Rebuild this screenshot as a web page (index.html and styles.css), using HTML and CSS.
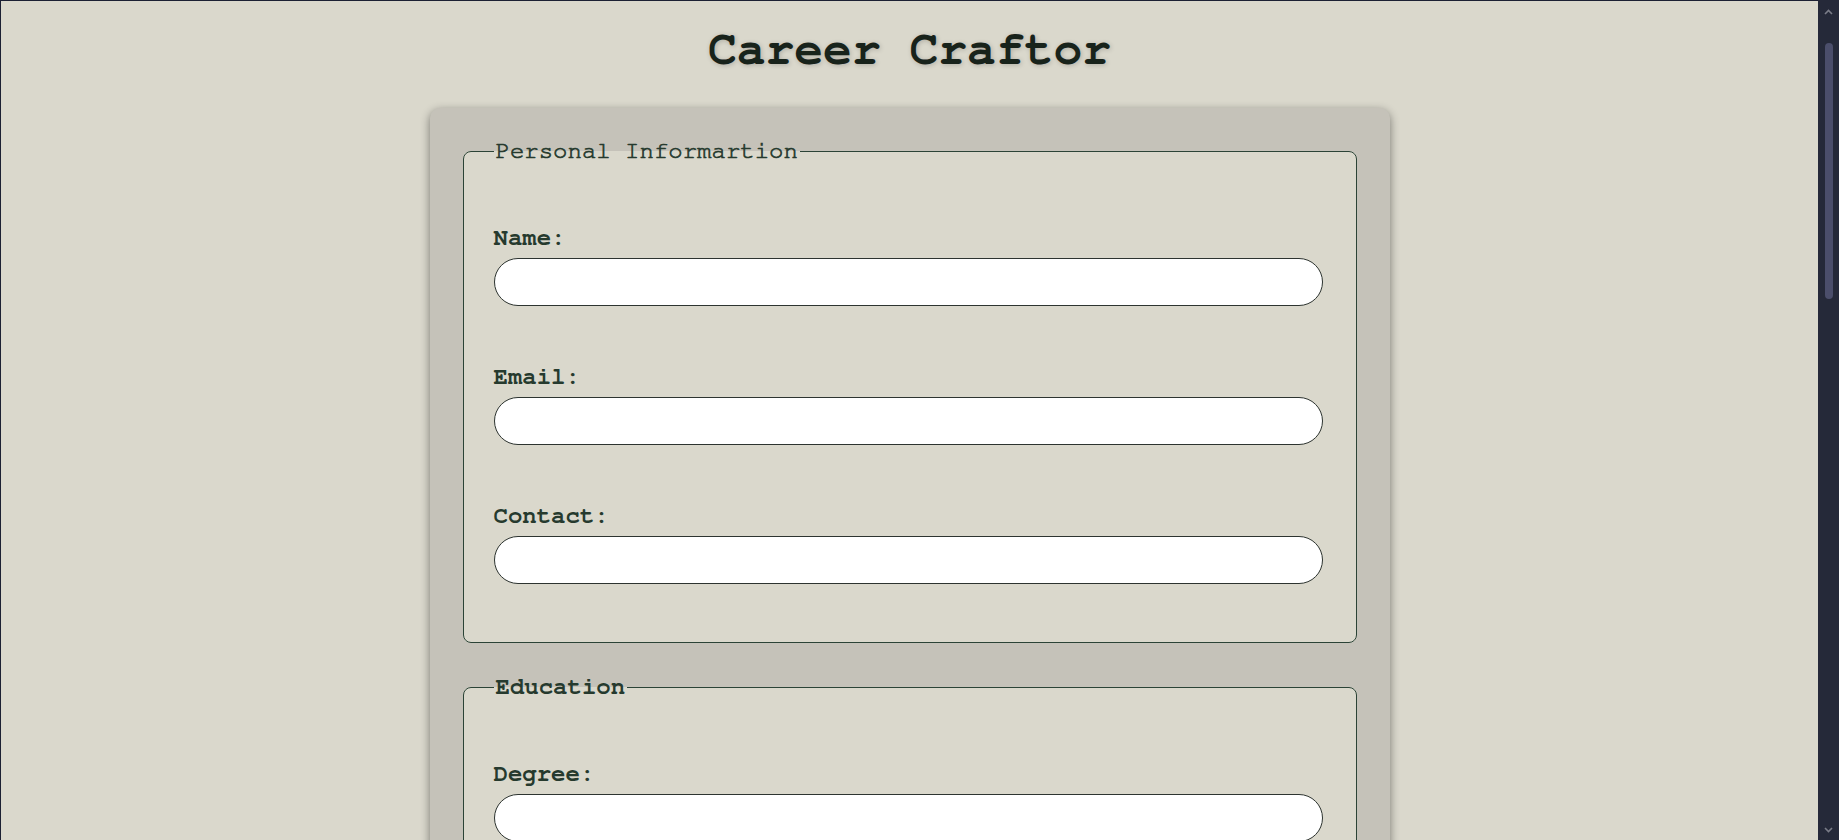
FILE: index.html
```html
<!DOCTYPE html>
<html lang="en">
<head>
<meta charset="utf-8">
<title>Career Craftor</title>
<link rel="stylesheet" href="styles.css">
</head>
<body>
<div class="window">
  <main class="page">
    <h1 class="title">Career Craftor</h1>
    <form class="card">
      <fieldset class="section">
        <legend class="legend legend-light">Personal Informartion</legend>
        <div class="group">
          <label class="label" for="name">Name:</label>
          <input class="field" id="name" type="text">
        </div>
        <div class="group">
          <label class="label" for="email">Email:</label>
          <input class="field" id="email" type="email">
        </div>
        <div class="group">
          <label class="label" for="contact">Contact:</label>
          <input class="field" id="contact" type="text">
        </div>
      </fieldset>
      <fieldset class="section">
        <legend class="legend">Education</legend>
        <div class="group">
          <label class="label" for="degree">Degree:</label>
          <input class="field" id="degree" type="text">
        </div>
        <div class="group">
          <label class="label" for="school">Institution:</label>
          <input class="field" id="school" type="text">
        </div>
      </fieldset>
    </form>
  </main>
  <div class="scrollbar">
    <div class="sb-btn sb-up">
      <svg width="9" height="6" viewBox="0 0 9 6"><path d="M1 5 L4.5 1.5 L8 5" fill="none" stroke="#7a7c88" stroke-width="1.6"/></svg>
    </div>
    <div class="sb-thumb"></div>
    <div class="sb-rest"></div>
    <div class="sb-btn sb-down">
      <svg width="9" height="6" viewBox="0 0 9 6"><path d="M1 1 L4.5 4.5 L8 1" fill="none" stroke="#7a7c88" stroke-width="1.6"/></svg>
    </div>
  </div>
</div>
</body>
</html>
```

FILE: styles.css
```css
html, body {
  margin: 0;
  padding: 0;
  height: 100%;
  overflow: hidden;
  background: #1c2033;
}

.window {
  display: flex;
  height: 100vh;
}

.page {
  flex: 1;
  min-width: 0;
  height: 100%;
  overflow: hidden;
  box-sizing: border-box;
  border-top: 1px solid #1c2033;
  border-left: 1px solid #1c2033;
  background: #dad8cc;
  font-family: "Nimbus Mono PS", "Nimbus Mono L", "FreeMono", "Courier", "Liberation Mono", monospace;
  color: #263a2e;
}

.title {
  margin: 22px 0 0;
  font-size: 48px;
  font-weight: bold;
  line-height: 54px;
  text-align: center;
  color: #18231b;
  text-shadow: 1px 1px 5px rgba(0, 0, 0, 0.2);
}

.card {
  width: 960px;
  box-sizing: border-box;
  margin: 31px auto 0;
  padding: 30px 33px;
  background: #c5c2b9;
  border-radius: 10px;
  box-shadow: 0 3px 10px rgba(0, 0, 0, 0.45);
}

.section {
  margin: 0 0 31px;
  padding: 2px 33px 58px 30px;
  border: 1px solid #2b4336;
  border-radius: 8px;
  background: #dad8cc;
}

.legend {
  padding: 0 2px;
  font-size: 24px;
  font-weight: bold;
  line-height: 27px;
  color: #263a2e;
}

.legend-light {
  font-weight: normal;
  -webkit-text-stroke: 0.7px #263a2e;
}

.group {
  display: flex;
  flex-direction: column;
  margin-top: 58px;
}

.label {
  font-size: 24px;
  font-weight: bold;
  line-height: 27px;
  color: #263a2e;
  margin-bottom: 6px;
}

.field {
  width: 100%;
  height: 48px;
  box-sizing: border-box;
  margin: 0;
  padding: 0 20px;
  border: 1px solid #2d3430;
  border-radius: 24px;
  background: #ffffff;
  font-family: inherit;
  font-size: 18px;
}

.scrollbar {
  width: 21px;
  flex: none;
  display: flex;
  flex-direction: column;
  align-items: center;
  background: #252939;
}

.sb-btn {
  display: flex;
  align-items: center;
  justify-content: center;
  width: 100%;
}

.sb-up {
  height: 24px;
}

.sb-thumb {
  width: 8px;
  height: 256px;
  margin-top: 19px;
  border-radius: 4px;
  background: #4b4e6b;
}

.sb-rest {
  flex: 1;
}

.sb-down {
  height: 20px;
}
```
